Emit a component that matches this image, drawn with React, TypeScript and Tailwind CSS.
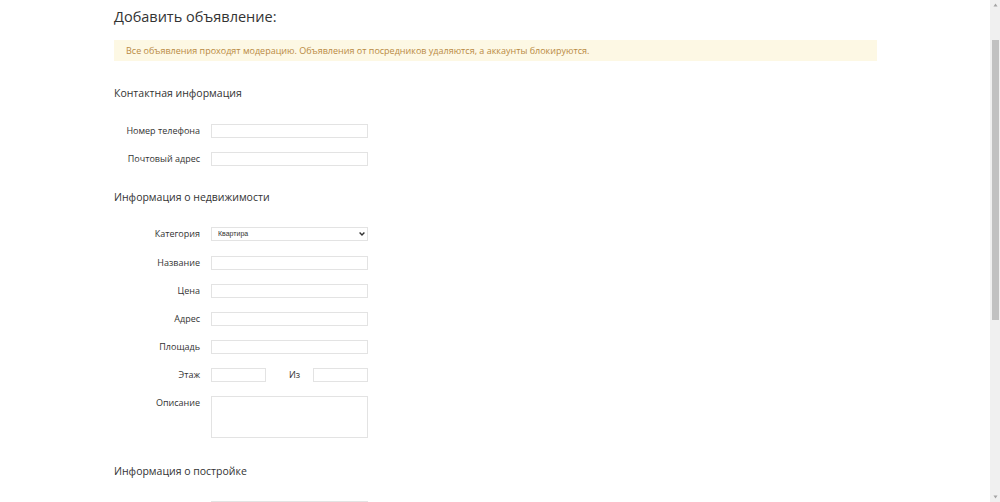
import * as React from "react";

const font = { fontFamily: '"Open Sans", "Noto Sans", sans-serif' };

function Field({ label, children }: { label: string; children: React.ReactNode }) {
  return (
    <div className="flex items-center h-[28px]">
      <label className="w-[86px] text-right text-[9px] leading-[14px] text-[#333]">{label}</label>
      <div className="ml-[11px] flex items-center">{children}</div>
    </div>
  );
}

function Input({ w = "w-[157px]" }: { w?: string }) {
  return <input type="text" className={`block ${w} h-[14px] border border-[#e3e3e3] bg-white outline-none`} />;
}

function Heading({ children, mt }: { children: React.ReactNode; mt: string }) {
  return <h2 className={`${mt} text-[10.5px] leading-[16px] text-[#333]`}>{children}</h2>;
}

// classic window scrollbar with arrow buttons
function Scrollbar() {
  return (
    <div className="w-[10px] shrink-0 bg-[#f0f0f0] flex flex-col items-center">
      <svg className="mt-[3px]" width="5" height="4" viewBox="0 0 5 4">
        <path d="M2.5 0.5 L4.5 3.5 L0.5 3.5 Z" fill="#a3a3a3" />
      </svg>
      <div className="mt-[33px] w-[7px] h-[280px] bg-[#c1c1c1]" />
      <div className="flex-1" />
      <svg className="mb-[3px]" width="5" height="4" viewBox="0 0 5 4">
        <path d="M0.5 0.5 L4.5 0.5 L2.5 3.5 Z" fill="#a3a3a3" />
      </svg>
    </div>
  );
}

export default function App() {
  return (
    <div className="flex h-screen bg-white text-[#333]" style={font}>
      <main className="flex-1 overflow-hidden">
        <div className="ml-[114px] w-[763px] pt-[6px]">
          <h1 className="text-[14.5px] leading-[22px] text-[#333]">Добавить объявление:</h1>

          <div className="mt-[12px] h-[21px] bg-[#fdf8e4] pl-[12px] flex items-center text-[9px] text-[#b98a43]">
            Все объявления проходят модерацию. Объявления от посредников удаляются, а аккаунты блокируются.
          </div>

          <Heading mt="mt-[24px]">Контактная информация</Heading>
          <div className="mt-[16px]">
            <Field label="Номер телефона">
              <Input />
            </Field>
            <Field label="Почтовый адрес">
              <Input />
            </Field>
          </div>

          <Heading mt="mt-[16px]">Информация о недвижимости</Heading>
          <div className="mt-[15px]">
            <Field label="Категория">
              <div className="relative">
                <select
                  className="block appearance-none w-[157px] h-[14px] border border-[#e3e3e3] bg-white text-[7px] leading-[12px] pl-[6px] py-0 outline-none"
                  style={{ fontFamily: '"Liberation Sans", Arial, sans-serif' }}
                  defaultValue="flat"
                >
                  <option value="flat">Квартира</option>
                  <option value="house">Дом</option>
                  <option value="room">Комната</option>
                </select>
                <svg
                  className="pointer-events-none absolute right-[3px] top-[5px]"
                  width="6"
                  height="4"
                  viewBox="0 0 6 4"
                >
                  <path d="M0.6 0.6 L3 3 L5.4 0.6" fill="none" stroke="#333" strokeWidth="1.4" />
                </svg>
              </div>
            </Field>
            <div className="mt-[1px]">
              <Field label="Название">
                <Input />
              </Field>
              <Field label="Цена">
                <Input />
              </Field>
              <Field label="Адрес">
                <Input />
              </Field>
              <Field label="Площадь">
                <Input />
              </Field>
              <Field label="Этаж">
                <Input w="w-[55px]" />
                <span className="ml-[23px] w-[24px] text-[9px] leading-[14px]">Из</span>
                <Input w="w-[55px]" />
              </Field>
            </div>
            <div className="mt-[7px] flex items-start">
              <label className="w-[86px] text-right text-[9px] leading-[14px]">Описание</label>
              <textarea className="block ml-[11px] w-[157px] h-[42px] border border-[#e3e3e3] resize-none outline-none" />
            </div>
          </div>

          <Heading mt="mt-[25px]">Информация о постройке</Heading>
          <div className="mt-[15px]">
            <Field label="Год постройки">
              <Input />
            </Field>
            <Field label="Материал стен">
              <Input />
            </Field>
          </div>
        </div>
      </main>
      <Scrollbar />
    </div>
  );
}
